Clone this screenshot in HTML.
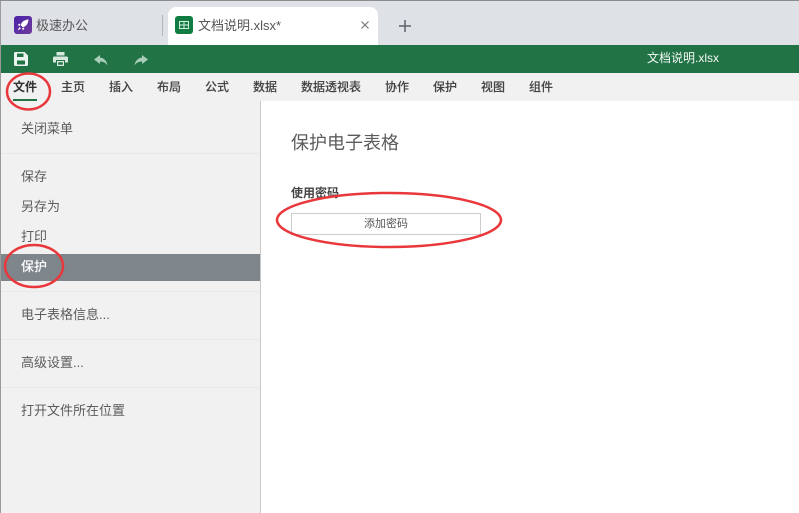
<!DOCTYPE html>
<html lang="zh"><head><meta charset="utf-8"><style>
html,body{margin:0;padding:0}
body{width:799px;height:513px;position:relative;overflow:hidden;background:#fff;font-family:"Liberation Sans","Noto Sans CJK SC",sans-serif;color:#444}
.a{position:absolute;white-space:nowrap}
.tb{font-size:12px;line-height:16px;top:79px;color:#444;font-weight:500;-webkit-text-stroke:.1px #444}
.m{font-size:13px;line-height:18px;left:21px;color:#5c5c5c}
.l{position:absolute;left:1px;width:259px;height:1px;background:#e8e8e8}
</style></head><body>
<div class="a" style="left:0;top:0;width:799px;height:1px;background:#8a8c8e"></div>
<div class="a" style="left:0;top:1px;width:799px;height:44px;background:#dee1e6"></div>
<div class="a" style="left:14px;top:16px;width:18px;height:18px;border-radius:3px;background:linear-gradient(135deg,#4a22a8,#6f3a9e)"></div>
<svg class="a" style="left:14px;top:16px" width="18" height="18" viewBox="0 0 18 18"><path d="M14.500 3.500C10.500 3.800 8 5.500 6.500 9L9 11.500C12.500 10 14.200 7.500 14.500 3.500ZM6 7.500L3.500 9L6 10ZM10.500 12L9 14.500L8 12ZM5.500 11L3.500 14.500L7 12.500Z" fill="#fff"/></svg>
<div class="a" style="left:36px;top:17px;font-size:13px;line-height:18px;color:#555">极速办公</div>
<div class="a" style="left:162px;top:15px;width:1px;height:21px;background:#b4b6ba"></div>
<div class="a" style="left:168px;top:7px;width:210px;height:38px;background:#fff;border-radius:8px 8px 0 0"></div>
<div class="a" style="left:175px;top:16px;width:18px;height:18px;border-radius:3px;background:#107c41"></div>
<svg class="a" style="left:175px;top:16px" width="18" height="18" viewBox="0 0 18 18"><path d="M4.500 5.500H13.500V12.500H4.500ZM4.500 9H13.500M9 5.500V12.500" fill="none" stroke="#d6efe0" stroke-width="1"/></svg>
<div class="a" style="left:198px;top:17px;font-size:13px;line-height:18px;color:#555">文档说明.xlsx*</div>
<svg class="a" style="left:360px;top:20px" width="10" height="10" viewBox="0 0 10 10"><path d="M1.500 1.500L8.500 8.500M8.500 1.500L1.500 8.500" stroke="#777" stroke-width="1.200"/></svg>
<svg class="a" style="left:398px;top:19px" width="14" height="14" viewBox="0 0 14 14"><path d="M7 1V13M1 7H13" stroke="#5f6368" stroke-width="1.500"/></svg>

<div class="a" style="left:0;top:45px;width:799px;height:28px;background:#217346"></div>
<svg class="a" style="left:14px;top:52px" width="14" height="14" viewBox="0 0 14 14"><path fill-rule="evenodd" d="M1.500 0H10.500L14 3.500V12.500A1.500 1.500 0 0 1 12.500 14H1.500A1.500 1.500 0 0 1 0 12.500V1.500A1.500 1.500 0 0 1 1.500 0ZM3 1.500V5H9.500V1.500ZM3 8.500V12.500H11V8.500Z" fill="#eef5f1"/></svg>
<svg class="a" style="left:53px;top:52px" width="15" height="14" viewBox="0 0 15 14"><path fill-rule="evenodd" d="M3.500 0H11.500V3.500H3.500ZM1.500 4.500H13.500A1.500 1.500 0 0 1 15 6V10.500H12V8H3V10.500H0V6A1.500 1.500 0 0 1 1.500 4.500ZM4 9H11V14H4ZM5.200 10.200V12.800H9.800V10.200Z" fill="#d9e8df"/></svg>
<svg class="a" style="left:94px;top:55px" width="14" height="11" viewBox="0 0 14 11"><path d="M6 0L0 4.500L6 9V6.500C9 6.500 11.500 7.500 13.500 10.500C13 6.500 10.500 3 6 2.500Z" fill="#a9cdb8"/></svg>
<svg class="a" style="left:134px;top:55px" width="14" height="11" viewBox="0 0 14 11"><path d="M8 0L14 4.500L8 9V6.500C5 6.500 2.500 7.500 .5 10.500C1 6.500 3.500 3 8 2.500Z" fill="#a9cdb8"/></svg>
<div class="a" style="left:647px;top:50px;font-size:12px;line-height:17px;color:#f4f8f5">文档说明.xlsx</div>

<div class="a" style="left:0;top:73px;width:799px;height:28px;background:#f1f1f1"></div>
<div class="a tb" style="left:13px;color:#333;font-weight:700">文件</div>
<div class="a" style="left:13px;top:99px;width:24px;height:2px;background:#217346"></div>
<div class="a tb" style="left:61px">主页</div>
<div class="a tb" style="left:109px">插入</div>
<div class="a tb" style="left:157px">布局</div>
<div class="a tb" style="left:205px">公式</div>
<div class="a tb" style="left:253px">数据</div>
<div class="a tb" style="left:301px">数据透视表</div>
<div class="a tb" style="left:385px">协作</div>
<div class="a tb" style="left:433px">保护</div>
<div class="a tb" style="left:481px">视图</div>
<div class="a tb" style="left:529px">组件</div>

<div class="a" style="left:0;top:101px;width:260px;height:412px;background:#f1f1f1"></div>
<div class="a" style="left:0;top:1px;width:1px;height:512px;background:#9a9a9a"></div>
<div class="a" style="left:260px;top:101px;width:1px;height:412px;background:#c8c8c8"></div>
<div class="a m" style="top:120px">关闭菜单</div>
<div class="l" style="top:153px"></div>
<div class="a m" style="top:168px">保存</div>
<div class="a m" style="top:198px">另存为</div>
<div class="a m" style="top:228px">打印</div>
<div class="a" style="left:1px;top:254px;width:259px;height:27px;background:#7e868c"></div>
<div class="a m" style="top:258px;color:#fff;font-weight:500">保护</div>
<div class="l" style="top:291px"></div>
<div class="a m" style="top:306px">电子表格信息...</div>
<div class="l" style="top:339px"></div>
<div class="a m" style="top:354px">高级设置...</div>
<div class="l" style="top:387px"></div>
<div class="a m" style="top:402px">打开文件所在位置</div>

<div class="a" style="left:291px;top:131px;font-size:18px;line-height:24px;color:#5c5c5c">保护电子表格</div>
<div class="a" style="left:291px;top:185px;font-size:12px;line-height:17px;color:#444;font-weight:700">使用密码</div>
<div class="a" style="left:291px;top:213px;width:188px;height:20px;border:1px solid #cdcdcd;text-align:center;font-size:11px;line-height:21px;color:#555;background:#fff">添加密码</div>

<svg class="a" style="left:0;top:0" width="799" height="513" viewBox="0 0 799 513" fill="none" stroke="#e8383c" stroke-width="2.500">
<ellipse cx="28.500" cy="91.500" rx="21.500" ry="18"/>
<ellipse cx="34" cy="266" rx="29" ry="21"/>
<ellipse cx="389" cy="220" rx="112" ry="27"/>
</svg>
</body></html>
